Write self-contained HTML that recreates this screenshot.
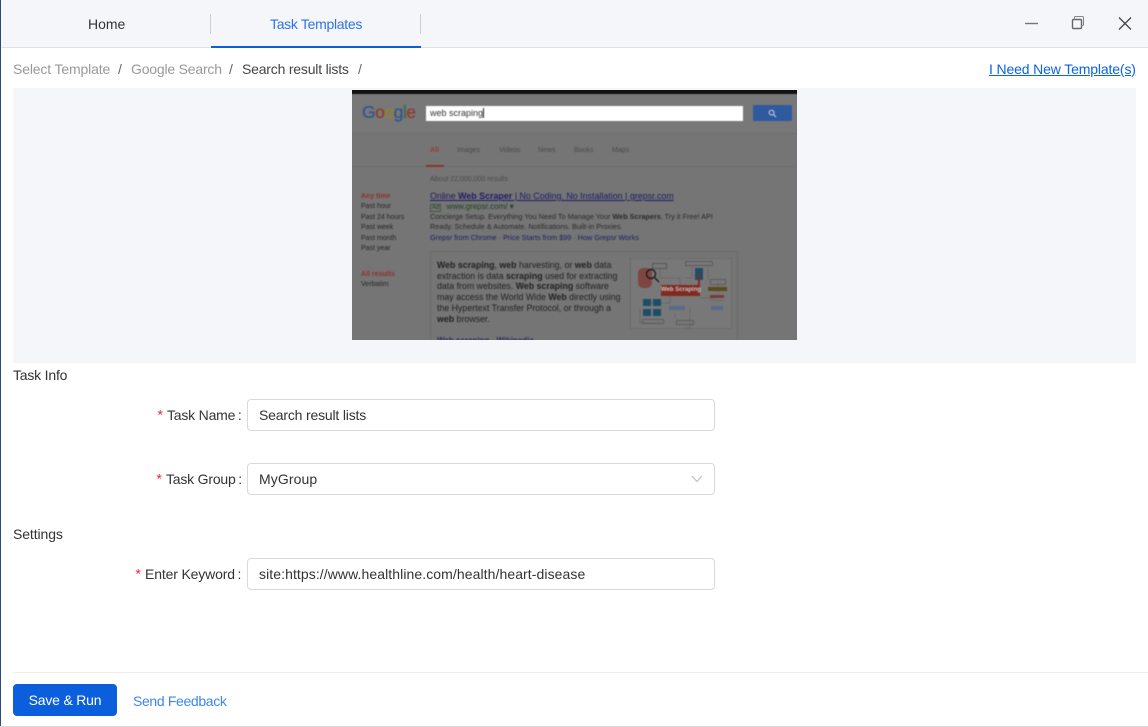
<!DOCTYPE html>
<html lang="en"><head><meta charset="utf-8"><title>Task Templates</title>
<style>
html,body{margin:0;padding:0;background:#fff}
body{width:1148px;height:727px;position:relative;overflow:hidden;font-family:"Liberation Sans",sans-serif;font-size:14px;color:#333}
.a{position:absolute;white-space:nowrap}
.lb{line-height:20px}
.req{color:#f5222d;font-family:"Liberation Mono",monospace}
.input{position:absolute;left:247px;height:30px;border:1px solid #d9d9d9;border-radius:4px;background:#fff;line-height:30px;padding-left:11px;box-sizing:content-box;width:455px;color:#333}
#shot{position:absolute;left:352px;top:90px;width:445px;height:250px;background:#757575;overflow:hidden;font-size:7px;color:#262626}
#shot .a{line-height:10px}
#shot .b{color:#1f1f1f;font-size:8.8px;line-height:10.7px}
.blur{filter:blur(.4px)}
</style></head><body>
<div class="a" style="left:0;top:0;width:1148px;height:47px;background:#f5f6fa"></div>
<div class="a" style="left:0;top:47px;width:1148px;height:1px;background:#dfe1e6"></div>
<div class="a" style="left:0;top:0;width:1px;height:727px;background:#2a4a80"></div>
<div class="a" style="left:0;top:726px;width:1148px;height:1px;background:#d8d8d8"></div>

<div class="a lb" style="left:88px;top:14px;color:#333">Home</div>
<div class="a" style="left:210px;top:14px;width:1px;height:20px;background:#c9ced6"></div>
<div class="a lb" style="left:270px;top:14px;color:#2f73e0;letter-spacing:-.3px">Task Templates</div>
<div class="a" style="left:420px;top:14px;width:1px;height:20px;background:#c9ced6"></div>
<div class="a" style="left:211px;top:46px;width:210px;height:2px;background:#0b5fdc"></div>

<svg class="a" style="left:1020px;top:12px" width="120" height="24" viewBox="0 0 120 24" fill="none" stroke="#555">
<path d="M5 11.5H18" stroke-width="1.4" stroke="#777"/>
<rect x="52.5" y="7.5" width="9" height="9" rx="1" stroke-width="1.4" stroke="#666"/>
<path d="M54.5 7.5V5.5a1 1 0 0 1 1-1h7a1 1 0 0 1 1 1v7a1 1 0 0 1-1 1h-1.5" stroke-width="1.1" stroke="#888"/>
<path d="M99 5.5L111 17.5M111 5.5L99 17.5" stroke-width="1.3" stroke="#444"/>
</svg>

<div class="a lb" style="left:13px;top:59px;color:#999;letter-spacing:-.15px">Select Template</div>
<div class="a lb" style="left:118px;top:59px;color:#666">/</div>
<div class="a lb" style="left:131px;top:59px;color:#999;letter-spacing:-.2px">Google Search</div>
<div class="a lb" style="left:229px;top:59px;color:#666">/</div>
<div class="a lb" style="left:242px;top:59px;color:#444;letter-spacing:-.2px">Search result lists</div>
<div class="a lb" style="left:358px;top:59px;color:#666">/</div>
<div class="a lb" style="left:989px;top:59px;color:#0b63e5;text-decoration:underline;letter-spacing:-.14px">I Need New Template(s)</div>

<div class="a" style="left:13px;top:88px;width:1123px;height:275px;background:#f5f6fa"></div>

<div id="shot"><div class="blur" style="position:absolute;inset:0">
<div class="a" style="left:-2px;top:-2px;width:449px;height:6px;background:#111"></div>
<div class="a" style="left:-2px;top:4px;width:449px;height:39px;background:#787878"></div>
<div class="a" style="left:-2px;top:43px;width:449px;height:1px;background:#6e6e6e"></div>
<div class="a" style="left:10px;top:11px;font-size:17.5px;line-height:22px;letter-spacing:-.5px;-webkit-text-stroke:.25px currentColor"><span style="color:#2f5590">G</span><span style="color:#8f3a30">o</span><span style="color:#97801f">o</span><span style="color:#2f5590">g</span><span style="color:#3d6d3d">l</span><span style="color:#8f3a30">e</span></div>
<div class="a" style="left:74px;top:16px;width:317px;height:15px;background:#fff"></div>
<div class="a" style="left:78px;top:18px;font-size:9px;line-height:11px;color:#333">web scraping<span style="border-left:1px solid #222"></span></div>
<div class="a" style="left:401px;top:15px;width:39px;height:16px;background:#2f5a9f;border-radius:1px"></div>
<svg class="a" style="left:416px;top:19px" width="9" height="9" fill="none" stroke="#cfd8e8"><circle cx="3.6" cy="3.6" r="2.4"/><path d="M5.5 5.5L8 8"/></svg>
<div class="a" style="left:78px;top:56px;font-weight:700;color:#9c3a30">All</div>
<div class="a" style="left:105px;top:56px;color:#4a4a4a">Images</div>
<div class="a" style="left:147px;top:56px;color:#4a4a4a">Videos</div>
<div class="a" style="left:186px;top:56px;color:#4a4a4a">News</div>
<div class="a" style="left:222px;top:56px;color:#4a4a4a">Books</div>
<div class="a" style="left:260px;top:56px;color:#4a4a4a">Maps</div>
<div class="a" style="left:-2px;top:76px;width:449px;height:1px;background:#6f6f6f"></div>
<div class="a" style="left:74px;top:75px;width:18px;height:2px;background:#8f3228"></div>
<div class="a" style="left:78px;top:85px;color:#4a4a4a">About 22,000,000 results</div>

<div class="a" style="left:9px;top:102px;font-weight:700;color:#8f3228">Any time</div>
<div class="a" style="left:9px;top:112px">Past hour</div>
<div class="a" style="left:9px;top:123px">Past 24 hours</div>
<div class="a" style="left:9px;top:133px">Past week</div>
<div class="a" style="left:9px;top:144px">Past month</div>
<div class="a" style="left:9px;top:154px">Past year</div>
<div class="a" style="left:9px;top:180px;font-weight:700;color:#8f3228">All results</div>
<div class="a" style="left:9px;top:190px">Verbatim</div>

<div class="a" style="left:78px;top:101px;font-size:8.9px;color:#1d1b66;text-decoration:underline">Online <b>Web Scraper</b> | No Coding. No Installation | grepsr.com</div>
<div class="a" style="left:78px;top:112px;font-size:8px;color:#22401f"><span style="border:1px solid #3f5a3f;padding:0 1px;font-size:6px;margin-right:3px">Ad</span> www.grepsr.com/ ▾</div>
<div class="a" style="left:78px;top:122px;color:#2a2a2a;font-size:7.28px">Concierge Setup. Everything You Need To Manage Your <b>Web Scrapers</b>. Try it Free! API</div>
<div class="a" style="left:78px;top:132px;color:#2a2a2a;font-size:7.28px">Ready. Schedule &amp; Automate. Notifications. Built-in Proxies.</div>
<div class="a" style="left:78px;top:143px;color:#1d1b66;font-size:7.28px">Grepsr from Chrome · Price Starts from $99 · How Grepsr Works</div>

<div class="a" style="left:78px;top:161px;width:306px;height:95px;border:1px solid #6c6c6c"></div>
<div class="a b" style="left:85px;top:170px"><b>Web scraping</b>, <b>web</b> harvesting, or <b>web</b> data<br>extraction is data <b>scraping</b> used for extracting<br>data from websites. <b>Web scraping</b> software<br>may access the World Wide <b>Web</b> directly using<br>the Hypertext Transfer Protocol, or through a<br><b>web</b> browser.</div>
<div class="a" style="left:85px;top:246px;color:#2a2a60;font-size:8px;font-weight:700">Web scraping - Wikipedia</div>

<div class="a" style="left:278px;top:168px;width:100px;height:69px;border:1px solid #6b6b6b;background:#787878"></div>
<svg class="a" style="left:278px;top:168px" width="102" height="71" fill="none" stroke="#636363" stroke-width=".7">
<path d="M30 10V20H50V28M62 8V20H56M78 10V22M88 24V34M92 30H80M10 50V65H30M16 45H40V36M45 60V55M60 50V70H55M70 40H85"/>
</svg>
<div class="a" style="left:286px;top:178px;width:14px;height:20px;background:#7e4640;border-radius:5px"></div>
<svg class="a" style="left:292px;top:178px" width="24" height="24" fill="none" stroke="#1c1c1c" stroke-width="1.4"><circle cx="7" cy="6" r="4.5"/><path d="M10.5 9.5L15 14"/></svg>
<div class="a" style="left:309px;top:195px;width:39px;height:11px;background:#812a20;color:#c8c8c8;font-size:6px;font-weight:700;line-height:11px;text-align:center">Web Scraping</div>
<div class="a" style="left:300px;top:173px;width:13px;height:4px;border:1px solid #555"></div>
<div class="a" style="left:333px;top:171px;width:26px;height:3px;border:1px solid #5c5c5c"></div>
<div class="a" style="left:343px;top:178px;width:8px;height:12px;background:#1f4d68"></div>
<div class="a" style="left:346px;top:184px;width:2px;height:11px;background:#812a20"></div>
<div class="a" style="left:291px;top:209px;width:8px;height:7px;background:#1f4d68"></div>
<div class="a" style="left:301px;top:209px;width:8px;height:7px;background:#1f4d68"></div>
<div class="a" style="left:291px;top:219px;width:8px;height:7px;background:#1f4d68"></div>
<div class="a" style="left:301px;top:219px;width:8px;height:7px;background:#1f4d68"></div>
<div class="a" style="left:317px;top:216px;width:16px;height:4px;background:#5a6a8a"></div>
<div class="a" style="left:290px;top:229px;width:20px;height:3px;border:1px solid #5c5c5c"></div>
<div class="a" style="left:324px;top:230px;width:16px;height:3px;border:1px solid #5c5c5c"></div>
<div class="a" style="left:358px;top:189px;width:14px;height:4px;border:1px solid #5c5c5c"></div>
<div class="a" style="left:356px;top:197px;width:19px;height:4px;background:#5c4a1a"></div>
<div class="a" style="left:358px;top:205px;width:14px;height:3px;background:#7a3a3a"></div>
<div class="a" style="left:358px;top:210px;width:14px;height:1px;background:#6a6a6a"></div>
<div class="a" style="left:359px;top:216px;width:12px;height:4px;background:#5a6a8a"></div>
</div></div>

<div class="a lb" style="left:13px;top:365px;letter-spacing:-.2px">Task Info</div>
<div class="a lb" style="left:156px;top:405px"><span class="req">*</span></div>
<div class="a lb" style="left:167px;top:405px;letter-spacing:-.2px">Task Name&#8201;:</div>
<div class="input" style="top:399px;letter-spacing:-.18px">Search result lists</div>

<div class="a lb" style="left:155px;top:469px"><span class="req">*</span></div>
<div class="a lb" style="left:166px;top:469px;letter-spacing:-.2px">Task Group&#8201;:</div>
<div class="input" style="top:463px;letter-spacing:.1px">MyGroup</div>
<svg class="a" style="left:690px;top:473px" width="14" height="12" fill="none" stroke="#bfbfbf" stroke-width="1.1"><path d="M2 3L7 8.5L12 3"/></svg>

<div class="a lb" style="left:13px;top:524px;letter-spacing:-.1px">Settings</div>
<div class="a lb" style="left:134px;top:564px"><span class="req">*</span></div>
<div class="a lb" style="left:145px;top:564px;letter-spacing:-.15px">Enter Keyword&#8201;:</div>
<div class="input" style="top:558px;letter-spacing:.08px">site:https://www.healthline.com/health/heart-disease</div>

<div class="a" style="left:13px;top:672px;width:1135px;height:1px;background:#eceef3"></div>
<div class="a" style="left:13px;top:684px;width:104px;height:32px;background:#0b5fdc;border-radius:4px;color:#fff;line-height:32px;text-align:center;letter-spacing:-.2px">Save &amp; Run</div>
<div class="a lb" style="left:133px;top:691px;color:#3b86f5;letter-spacing:-.35px">Send Feedback</div>
</body></html>
